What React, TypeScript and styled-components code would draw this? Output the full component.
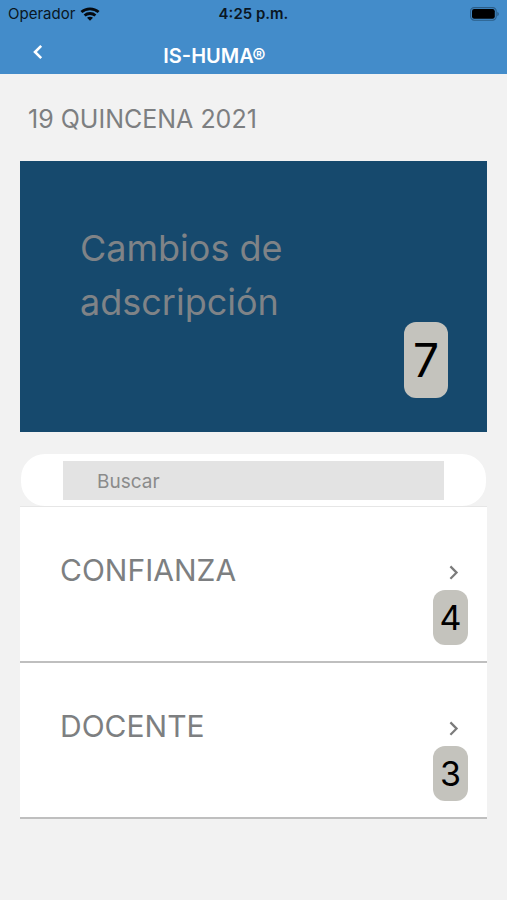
import React from "react";
import styled, { createGlobalStyle } from "styled-components";

const GlobalStyle = createGlobalStyle`
  * { box-sizing: border-box; }
  body {
    margin: 0;
    background: #f2f2f2;
    color: #7d7f81;
    font-family: Inter, "Liberation Sans", sans-serif;
  }
  button, input { font: inherit; color: inherit; }
`;

const Screen = styled.div`
  min-height: 100vh;
  background: #f2f2f2;
`;

const Header = styled.header`
  background: #438cca;
`;

const StatusBar = styled.div`
  display: grid;
  grid-template-columns: 1fr auto 1fr;
  align-items: center;
  height: 28px;
  padding: 0 8px;
  color: #0a1622;
  font-size: 14px;
  line-height: 20px;
`;

const Carrier = styled.div`
  display: flex;
  align-items: center;
  gap: 5px;
  font-size: 15px;
`;

const Clock = styled.span`
  font-size: 15px;
  font-weight: 600;
`;

const BatteryIcon = styled.svg`
  justify-self: end;
`;

const NavBar = styled.nav`
  display: grid;
  grid-template-columns: 76px 1fr 154px;
  align-items: center;
  height: 46px;
  color: #ffffff;
`;

const BackButton = styled.button`
  display: flex;
  align-items: center;
  justify-content: center;
  height: 46px;
  padding: 2px 0 0;
  border: 0;
  background: none;
`;

const AppTitle = styled.h1`
  margin: 0;
  padding: 10px 0 0;
  font-size: 20px;
  line-height: 24px;
  font-weight: 600;
  text-align: center;
  white-space: nowrap;
`;

const Content = styled.main`
  padding: 28px 20px;
`;

const Period = styled.h2`
  margin: 0 0 24px;
  padding: 0 8px;
  font-size: 25px;
  line-height: 35px;
  font-weight: 400;
`;

const SummaryCard = styled.section`
  display: flex;
  flex-direction: column;
  justify-content: space-between;
  min-height: 271px;
  margin-bottom: 22px;
  padding: 60px 39px 34px 60px;
  background: #16496d;
`;

const SummaryTitle = styled.h3`
  max-width: 260px;
  margin: 0;
  color: #7f8387;
  font-size: 36px;
  line-height: 54px;
  font-weight: 400;
`;

const Badge = styled.span<{ $large?: boolean }>`
  display: flex;
  align-items: center;
  justify-content: center;
  align-self: flex-end;
  width: ${(p) => (p.$large ? 44 : 35)}px;
  height: ${(p) => (p.$large ? 76 : 55)}px;
  border-radius: 12px;
  background: #c4c3bd;
  color: #000000;
  font-size: ${(p) => (p.$large ? 46 : 34)}px;
  line-height: 1;
  font-weight: 400;
`;

const SummaryFooter = styled.div`
  display: flex;
  justify-content: flex-end;
  margin-top: -8px;
`;

const SearchBar = styled.form`
  margin: 0 1px;
  padding: 7px 42px 6px;
  border-radius: 24px;
  background: #ffffff;
`;

const SearchInput = styled.input`
  display: block;
  width: 100%;
  height: 39px;
  padding: 2px 34px 0;
  border: 0;
  border-radius: 0;
  background: #e3e3e3;
  font-size: 19px;

  &::placeholder {
    color: #8b8b8b;
    opacity: 1;
  }
`;

const GroupList = styled.ul`
  margin: 0;
  padding: 0;
  border-top: 1px solid #e6e6e6;
  list-style: none;
`;

const GroupItem = styled.li`
  border-bottom: 2px solid #bfbfbf;
  background: #ffffff;
`;

const GroupButton = styled.button`
  display: flex;
  align-items: flex-start;
  justify-content: space-between;
  width: 100%;
  height: 154px;
  padding: 43px 19px 0 40px;
  border: 0;
  background: none;
  text-align: left;
`;

const GroupName = styled.span`
  font-size: 30px;
  line-height: 40px;
  font-weight: 400;
`;

const GroupMeta = styled.span`
  display: flex;
  flex-direction: column;
  gap: 8px;
  padding-top: 14px;
`;

const ChevronIcon = styled.svg`
  align-self: flex-end;
  margin-right: 9px;
`;

const groups = [
  { name: "CONFIANZA", count: 4 },
  { name: "DOCENTE", count: 3 },
];

export default function App() {
  return (
    <Screen>
      <GlobalStyle />
      <Header>
        <StatusBar>
          <Carrier>
            <span>Operador</span>
            <svg width="20" height="14" viewBox="0 0 20 14" fill="none" stroke="#050a10" strokeWidth="2.8" aria-hidden="true">
              <path d="M1.4 5C6.2.7 13.8.7 18.6 5" />
              <path d="M4.6 8.5c3-2.7 7.8-2.7 10.8 0" />
              <path d="M10 13.8 7 10.8c1.6-1.5 4.4-1.5 6 0z" fill="#050a10" stroke="none" />
            </svg>
          </Carrier>
          <Clock>4:25 p.m.</Clock>
          <BatteryIcon width="29" height="14" viewBox="0 0 29 14" aria-hidden="true">
            <rect x=".6" y=".6" width="25.6" height="12.6" rx="3.6" fill="none" stroke="#2b5d88" strokeWidth="1.1" />
            <rect x="2" y="2" width="22.8" height="9.8" rx="2.2" fill="#000000" />
            <path d="M27.3 4.8c2 .8 2 3.6 0 4.4z" fill="#2b5d88" />
          </BatteryIcon>
        </StatusBar>
        <NavBar>
          <BackButton type="button" aria-label="Atrás">
            <svg width="10" height="16" viewBox="0 0 10 16" fill="none" stroke="currentColor" strokeWidth="2.6" aria-hidden="true">
              <path d="M8.2 1.8 2 8l6.2 6.2" />
            </svg>
          </BackButton>
          <AppTitle>IS-HUMA®</AppTitle>
        </NavBar>
      </Header>
      <Content>
        <Period>19 QUINCENA 2021</Period>
        <SummaryCard>
          <SummaryTitle>Cambios de adscripción</SummaryTitle>
          <SummaryFooter>
            <Badge $large>7</Badge>
          </SummaryFooter>
        </SummaryCard>
        <SearchBar role="search">
          <SearchInput type="text" placeholder="Buscar" aria-label="Buscar" />
        </SearchBar>
        <GroupList>
          {groups.map((group) => (
            <GroupItem key={group.name}>
              <GroupButton type="button">
                <GroupName>{group.name}</GroupName>
                <GroupMeta>
                  <ChevronIcon width="11" height="18" viewBox="0 0 11 18" fill="none" stroke="#7b7b7b" strokeWidth="2.2" aria-hidden="true">
                    <path d="M2.4 2.4 8.6 8.6 2.4 14.8" />
                  </ChevronIcon>
                  <Badge>{group.count}</Badge>
                </GroupMeta>
              </GroupButton>
            </GroupItem>
          ))}
        </GroupList>
      </Content>
    </Screen>
  );
}
